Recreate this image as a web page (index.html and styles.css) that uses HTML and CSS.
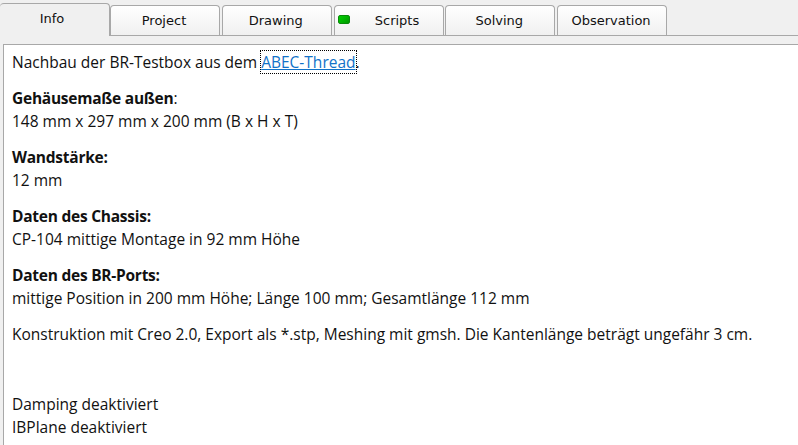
FILE: index.html
```html
<!DOCTYPE html>
<html lang="de">
<head>
<meta charset="utf-8">
<title>Info</title>
<link rel="stylesheet" href="styles.css">
</head>
<body>
<div class="tabs">
  <div class="tab active">Info</div>
  <div class="tab">Project</div>
  <div class="tab">Drawing</div>
  <div class="tab has-led"><span class="led"></span>Scripts</div>
  <div class="tab">Solving</div>
  <div class="tab">Observation</div>
</div>
<div class="panel">
  <p>Nachbau der BR-Testbox aus dem <a class="link" href="#">ABEC-Thread</a>.</p>
  <p><b>Gehäusemaße außen</b>:<br>148 mm x 297 mm x 200 mm (B x H x T)</p>
  <p><b>Wandstärke:</b><br>12 mm</p>
  <p><b>Daten des Chassis:</b><br>CP-104 mittige Montage in 92 mm Höhe</p>
  <p><b>Daten des BR-Ports:</b><br>mittige Position in 200 mm Höhe; Länge 100 mm; Gesamtlänge 112 mm</p>
  <p>Konstruktion mit Creo 2.0, Export als *.stp, Meshing mit gmsh. Die Kantenlänge beträgt ungefähr 3 cm.</p>
  <p class="spaced">Damping deaktiviert<br>IBPlane deaktiviert</p>
</div>
</body>
</html>
```
FILE: styles.css
```css
html, body {
  margin: 0;
  height: 100%;
  overflow: hidden;
}
body {
  background: #f0f0f0;
  display: flex;
  flex-direction: column;
  height: 445px;
}
.tabs {
  display: flex;
  align-items: flex-end;
  height: 36px;
  box-sizing: border-box;
  border-bottom: 1px solid #a8a8a8;
  flex: none;
}
.tab {
  position: relative;
  box-sizing: border-box;
  width: 110px;
  height: 30px;
  margin-right: 1.75px;
  padding-right: 2px;
  border: 1px solid #a8a8a8;
  border-bottom: 0;
  border-radius: 4px 4px 0 0;
  background: linear-gradient(#ffffff, #f0f0f0);
  font: 13px/29px "DejaVu Sans", sans-serif;
  color: #111;
  text-align: center;
}
.tab.active {
  width: 110px;
  height: 33px;
  margin-right: 0;
  margin-bottom: -1px;
  border-left: 0;
  padding-right: 5px;
  background: #f0f0f0;
  line-height: 30px;
}
.tab.has-led {
  padding-left: 19px;
}
.led {
  position: absolute;
  left: 3px;
  top: 9px;
  width: 12px;
  height: 9px;
  border-radius: 2px;
  background: linear-gradient(135deg, #00d000, #009a00);
  border: 1px solid #0a8a0a;
  box-sizing: border-box;
}
.panel {
  flex: 1;
  margin: 8px 0 0 3px;
  padding: 6px 0 0 8px;
  background: #fff;
  border-top: 1px solid #a8a8a8;
  border-left: 1px solid #a8a8a8;
  font: 15.5px/23px "Open Sans", sans-serif;
  color: #111;
}
.panel b {
  letter-spacing: -0.25px;
}
.panel p {
  margin: 0 0 13px;
}
.panel .spaced {
  margin-top: 47px;
}
.link {
  color: #1272c8;
  text-decoration: underline;
  outline: 1px dotted #000;
}
```
